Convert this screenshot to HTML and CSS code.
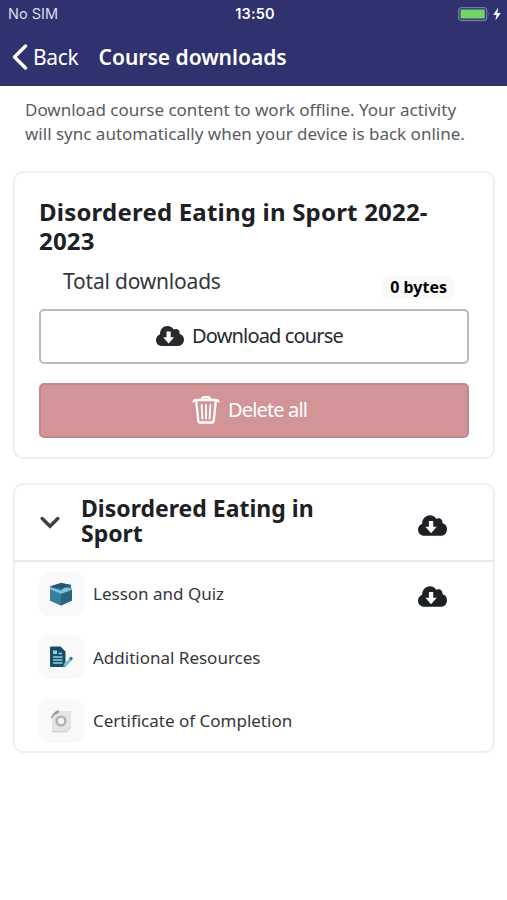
FILE: index.html
```html
<!DOCTYPE html>
<html lang="en">
  <head>
    <meta charset="UTF-8" />
    <meta name="viewport" content="width=device-width, initial-scale=1.0" />
    <title>Course downloads</title>
    <link rel="stylesheet" href="styles.css" />
  </head>

  <body>
    <!-- Shared icons -->
    <svg class="icon-defs" aria-hidden="true">
      <symbol id="cloud-download" viewBox="0 0 28 20">
        <path
          fill="currentColor"
          fill-rule="evenodd"
          d="M6.2 20C2.7 20 0 17.500 0 14.200C0 11.400 1.600 9.200 4 8.300C3.900 3.500 7.300 0 11.400 0C14.200 0 16.500 1.400 17.700 3.600C20.700 1.900 24.100 4.100 23.700 7.900C26.300 8.400 28 10.900 28 13.600C28 17.200 25.500 20 22.200 20ZM10.500 5.600V11.200H7.100L12.600 17.600L18.100 11.200H14.700V5.600Z"
        />
      </symbol>
    </svg>

    <header>
      <div class="status">
        <span class="carrier">No SIM</span>
        <span class="time">13:50</span>
        <svg class="battery" width="44" height="16" viewBox="0 0 44 16">
          <rect x=".7" y="1.700" width="28" height="12.800" rx="3" fill="none" stroke="#777aa5" stroke-width="1.300" />
          <rect x="2.500" y="3.600" width="24.300" height="9" rx="1" fill="#72d567" />
          <path d="M30.300 6q1.700 2 0 4z" fill="#777aa5" />
          <path d="M40.200 1.500L35.200 9.100H38.500L37.400 14.500L42.800 7H39.400Z" fill="#fff" />
        </svg>
      </div>
      <div class="toolbar">
        <svg class="back-icon" width="16" height="26" viewBox="0 0 16 26">
          <path d="M13.500 2L2.500 13L13.500 24" fill="none" stroke="#fff" stroke-width="3.400" stroke-linecap="round" stroke-linejoin="round" />
        </svg>
        <span class="back">Back</span>
        <h1>Course downloads</h1>
      </div>
    </header>

    <main>
      <p class="intro">
        Download course content to work offline. Your activity<br />
        will sync automatically when your device is back online.
      </p>

      <section class="card summary">
        <h2>Disordered Eating in Sport 2022-<br />2023</h2>
        <div class="total">
          <span class="total-label">Total downloads</span>
          <span class="badge">0 bytes</span>
        </div>
        <button class="btn">
          <svg width="28" height="20"><use href="#cloud-download" /></svg>
          <span>Download course</span>
        </button>
        <button class="btn danger">
          <svg width="28" height="29" viewBox="0 0 28 29" fill="none" stroke="#fff" stroke-width="2.300" stroke-linecap="round" stroke-linejoin="round">
            <path d="M1.500 6.500Q2 5 4 5H24Q26 5 26.500 6.500M10 5Q10 2.200 12 2.200H16Q18 2.200 18 5M4.300 7L6.300 26Q6.500 27.500 8 27.500H20Q21.500 27.500 21.700 26L23.700 7" />
            <path d="M9.600 10L10.400 23.500M14 10V23.500M18.400 10L17.600 23.500" stroke-width="1.900" />
          </svg>
          <span>Delete all</span>
        </button>
      </section>

      <section class="card modules">
        <div class="section-head">
          <svg class="chevron" width="20" height="14" viewBox="0 0 20 14">
            <path d="M2.200 2.500L10 10.300L17.800 2.500" fill="none" stroke="#3e4144" stroke-width="3.400" stroke-linecap="round" />
          </svg>
          <h3>Disordered Eating in<br />Sport</h3>
          <svg class="cloud" width="29" height="21"><use href="#cloud-download" /></svg>
        </div>

        <div class="row">
          <div class="tile">
            <svg width="24" height="24" viewBox="0 0 24 24">
              <path d="M1 4.500L12 1L22 3V6L23 7V18.500L12 23.500L1 18.500Z" fill="#32718e" />
              <path d="M1 5L12 8.500L16 5.500L23 6.500V8L12 12L1 7.500Z" fill="#7dc3da" />
              <path d="M1 4.500L12 1L22.500 3L16 5.500L12 6.500Z" fill="#25566f" />
              <path d="M12 12V23.500L1 18.500V7.500Z" fill="#387d99" />
              <path d="M12 12L23 8V18.500L12 23.500Z" fill="#2c6480" />
            </svg>
          </div>
          <span class="name">Lesson and Quiz</span>
          <svg class="cloud" width="29" height="21"><use href="#cloud-download" /></svg>
        </div>

        <div class="row">
          <div class="tile">
            <svg width="24" height="24" viewBox="0 0 24 24">
              <path d="M2 1.500H11.500L16.500 6.500V22H2Q1 22 1 21V2.500Q1 1.500 2 1.500Z" fill="#174f69" />
              <path d="M4 5.500H8V9H4Z" fill="#91cddd" />
              <path d="M9.500 8.500H13M4 12H13.500M4 15H13.500M4 18H13.500" stroke="#91cddd" stroke-width="1.300" />
              <path d="M14 22L15.500 18L21 13.200L23 15L18 20.500Z" fill="#79bdd1" />
              <circle cx="22" cy="13.500" r="1.700" fill="#39788f" />
            </svg>
          </div>
          <span class="name">Additional Resources</span>
        </div>

        <div class="row">
          <div class="tile">
            <svg width="24" height="24" viewBox="0 0 24 24">
              <path d="M9 2H22V19L18 23H3V10Z" fill="#e4e4e4" />
              <path d="M2 9.500Q3 3 10 1L9.500 4Q5 5.500 3.500 9Z" fill="#999" />
              <path d="M3 22.800H17.500L22 18.500" fill="none" stroke="#c8c8c8" />
              <circle cx="12" cy="12" r="4.400" fill="#f4f4f4" stroke="#b0b0b0" stroke-width="2.400" />
            </svg>
          </div>
          <span class="name">Certificate of Completion</span>
        </div>
      </section>
    </main>
  </body>
</html>
```
FILE: styles.css
```css
* {
  box-sizing: border-box;
}
body {
  margin: 0;
  background: #fff;
  color: #1d2125;
  font-family: "Noto Sans", "Open Sans", sans-serif;
  white-space: nowrap;
}
h1,
h2,
h3,
p {
  margin: 0;
}
svg {
  display: block;
  flex: none;
}
.icon-defs {
  display: none;
}

/* Header */
header {
  height: 86px;
  background: #2f326f;
  color: #fff;
}
.status {
  display: grid;
  grid-template-columns: 1fr auto 1fr;
  align-items: center;
  height: 28px;
  padding: 0 5px 1px 8px;
  font-family: Inter, sans-serif;
  font-size: 14.5px;
}
.carrier {
  color: #dcdde9;
}
.time {
  font-weight: 600;
  letter-spacing: 0.2px;
}
.battery {
  justify-self: end;
}
.toolbar {
  display: flex;
  align-items: center;
  height: 58px;
  padding-left: 12px;
}
.back {
  margin-left: 5px;
  font-size: 21px;
  letter-spacing: -0.3px;
}
h1 {
  margin-left: 20px;
  font-size: 21px;
  font-weight: 600;
}

/* Content */
.intro {
  padding: 12px 25px 0;
  color: #595c5f;
  font-size: 17px;
  line-height: 24px;
}
.card {
  margin: 0 12px 0 13px;
  border: 2px solid #eeefef;
  border-radius: 10px;
}
.summary {
  height: 288px;
  margin-top: 25px;
  padding: 24px 24px 0;
}
h2 {
  font-size: 24px;
  letter-spacing: 0.2px;
  line-height: 29px;
}
.total {
  display: flex;
  justify-content: space-between;
  height: 54px;
  padding: 13px 14px 0 24px;
}
.total-label {
  font-size: 21px;
  letter-spacing: -0.2px;
  line-height: 26px;
  color: #34373a;
}
.badge {
  height: 23px;
  margin-top: 8px;
  padding: 0 8px;
  border-radius: 8px;
  background: #f9f9fa;
  color: #000;
  font-size: 16px;
  font-weight: 700;
  line-height: 23px;
}
.btn {
  display: flex;
  align-items: center;
  justify-content: center;
  gap: 8px;
  width: 100%;
  height: 55px;
  padding: 0 15px 2px 6px;
  border: 2px solid #b9bbbc;
  border-radius: 5px;
  background: #fff;
  color: #26292d;
  font-family: inherit;
  font-size: 20px;
  letter-spacing: -0.85px;
}
.danger {
  margin-top: 19px;
  border-color: #c08990;
  background: #d39498;
  color: #fff;
}
.modules {
  height: 270px;
  margin-top: 24px;
}
.section-head {
  display: flex;
  align-items: center;
  height: 77px;
  padding: 0 46px 0 25px;
  border-bottom: 2px solid #e9eaeb;
}
h3 {
  margin: -3px 0 0 21px;
  font-size: 23px;
  line-height: 25px;
}
.cloud {
  margin-left: auto;
}
.section-head .cloud {
  margin-top: 5px;
}
.row {
  display: flex;
  align-items: center;
  height: 63.5px;
  padding: 0 46px 0 24px;
}
.row .cloud {
  margin-top: 5px;
}
.tile {
  display: flex;
  align-items: center;
  justify-content: center;
  width: 45px;
  height: 44px;
  padding-right: 2px;
  border-radius: 10px;
  background: #f9f9fa;
}
.name {
  margin-left: 9px;
  color: #34373a;
  font-size: 17px;
}
```
